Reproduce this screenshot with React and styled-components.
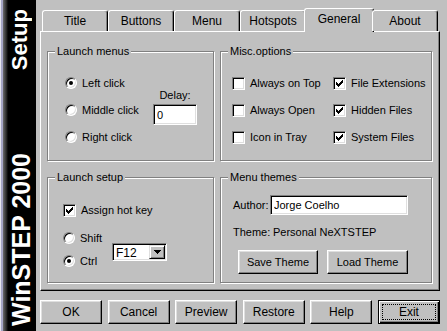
import React from "react";
import styled, { createGlobalStyle } from "styled-components";

const Global = createGlobalStyle`
  html, body {
    margin: 0;
    padding: 0;
    background: #c0c0c0;
  }
  body {
    font-family: "Liberation Sans", Arial, sans-serif;
    color: #000;
  }
`;

const Window = styled.div`
  display: flex;
  width: 447px;
  height: 331px;
  background: #c0c0c0;
  overflow: hidden;
`;

const Sidebar = styled.div`
  width: 36px;
  flex-shrink: 0;
  box-sizing: border-box;
  display: flex;
  flex-direction: column;
  justify-content: space-between;
  align-items: flex-start;
  padding: 9px 0 5px 9px;
  background: linear-gradient(
    to right,
    #e4e4ec 0 1px,
    #a4a4c4 1px 3px,
    #6a6a6a 3px,
    #1c1c1c 7px,
    #000 8px 100%
  );
`;

const SideText = styled.div`
  writing-mode: vertical-rl;
  transform: rotate(180deg);
  color: #fff;
  font-weight: bold;
  font-size: ${(p) => p.$size}px;
  line-height: 1;
  white-space: nowrap;
`;

const Main = styled.div`
  flex: 1;
  display: flex;
  flex-direction: column;
  padding: 8px 7px 0 4px;
`;

const TabRow = styled.div`
  display: flex;
  align-items: flex-end;
  height: 23px;
  padding: 0 2px;
  position: relative;
  z-index: 1;
`;

const Tab = styled.div`
  flex: 0 0 ${(p) => (p.$active ? 70 : 66)}px;
  height: ${(p) => (p.$active ? 24 : 21)}px;
  margin: ${(p) => (p.$active ? "0 -2px -1px" : "0")};
  box-sizing: border-box;
  background: #c0c0c0;
  border-top: 1px solid #fff;
  border-left: 1px solid #fff;
  border-right: 1px solid #000;
  border-radius: 3px 3px 0 0;
  box-shadow: inset -1px 0 #808080;
  display: flex;
  align-items: center;
  justify-content: center;
  padding-bottom: ${(p) => (p.$active ? 3 : 0)}px;
  font-size: 12px;
`;

const Panel = styled.div`
  height: 260px;
  box-sizing: border-box;
  border-top: 1px solid #fff;
  border-left: 1px solid #fff;
  border-right: 1px solid #000;
  border-bottom: 1px solid #000;
  box-shadow: inset -1px -1px #808080;
  display: grid;
  grid-template-columns: 167px 212px;
  grid-template-rows: 110px 106px;
  column-gap: 6px;
  row-gap: 16px;
  padding: 19px 6px 0 6px;
`;

const Group = styled.div`
  position: relative;
  border: 1px solid #808080;
  box-shadow: inset 1px 1px #fff, 1px 1px #fff;
  font-size: 11px;
`;

const Legend = styled.span`
  position: absolute;
  top: -7px;
  left: 7px;
  padding: 0 2px;
  background: #c0c0c0;
  line-height: 13px;
`;

const LaunchBody = styled.div`
  display: flex;
  align-items: flex-start;
  padding: 24px 0 0 17px;
`;

const OptionList = styled.div`
  display: flex;
  flex-direction: column;
  gap: ${(p) => p.$gap}px;
  width: ${(p) => (p.$width ? `${p.$width}px` : "auto")};
`;

const Option = styled.label`
  display: flex;
  align-items: center;
  gap: 5px;
  height: 14px;
  white-space: nowrap;
`;

const Radio = styled.span`
  width: 12px;
  height: 12px;
  flex-shrink: 0;
  box-sizing: border-box;
  border-radius: 50%;
  background: #fff;
  border: 1px solid;
  border-color: #808080 #fff #fff #808080;
  box-shadow: inset 1px 1px #000, inset -1px -1px #dfdfdf;
  display: flex;
  align-items: center;
  justify-content: center;

  &::after {
    content: "";
    display: ${(p) => (p.$on ? "block" : "none")};
    width: 4px;
    height: 4px;
    border-radius: 50%;
    background: #000;
  }
`;

const Box = styled.span`
  width: 13px;
  height: 13px;
  flex-shrink: 0;
  box-sizing: border-box;
  background: #fff;
  border: 1px solid;
  border-color: #808080 #fff #fff #808080;
  box-shadow: inset 1px 1px #000, inset -1px -1px #dfdfdf;
  display: flex;
  align-items: center;
  justify-content: center;
`;

const DelayCol = styled.div`
  display: flex;
  flex-direction: column;
  align-items: center;
  gap: 2px;
  margin-top: 13px;
  width: 44px;
`;

const Caption = styled.span`
  line-height: 13px;
  white-space: nowrap;
  width: ${(p) => (p.$width ? `${p.$width}px` : "auto")};
`;

const Field = styled.input`
  width: ${(p) => p.$w}px;
  height: ${(p) => p.$h}px;
  box-sizing: border-box;
  margin: 0;
  padding: 0 0 0 3px;
  background: #fff;
  border: 1px solid;
  border-color: #808080 #fff #fff #808080;
  box-shadow: inset 1px 1px #000, inset -1px -1px #dfdfdf;
  font: 11px "Liberation Sans", Arial, sans-serif;
  color: #000;
  outline: none;
`;

const MiscGrid = styled.div`
  display: grid;
  grid-template-columns: 101px auto;
  row-gap: 13px;
  padding: 24px 0 0 11px;
`;

const SetupBody = styled.div`
  display: flex;
  flex-direction: column;
  padding: 25px 0 0 15px;
`;

const KeyRow = styled.div`
  display: flex;
  align-items: flex-start;
  margin-top: 14px;
`;

const Select = styled.div`
  width: 55px;
  height: 18px;
  margin-top: 12px;
  box-sizing: border-box;
  background: #fff;
  border: 1px solid;
  border-color: #808080 #fff #fff #808080;
  box-shadow: inset 1px 1px #000, inset -1px -1px #dfdfdf;
  display: flex;
  align-items: stretch;
  padding: 1px 1px 1px 2px;
  font-size: 12px;
`;

const SelectValue = styled.span`
  flex: 1;
  display: flex;
  align-items: center;
  padding-left: 1px;
  padding-top: 1px;
`;

const DropButton = styled.span`
  width: 16px;
  box-sizing: border-box;
  background: #c0c0c0;
  border: 1px solid;
  border-color: #dfdfdf #000 #000 #dfdfdf;
  box-shadow: inset 1px 1px #fff, inset -1px -1px #808080;
  display: flex;
  align-items: center;
  justify-content: center;
`;

const ThemeBody = styled.div`
  display: flex;
  flex-direction: column;
  padding: 17px 0 0 12px;
`;

const Row = styled.div`
  display: flex;
  align-items: center;
  gap: ${(p) => p.$gap || 0}px;
  margin-top: ${(p) => p.$top || 0}px;
  padding-left: ${(p) => p.$left || 0}px;
`;

const Button = styled.button`
  width: ${(p) => p.$w || 62}px;
  height: 24px;
  box-sizing: border-box;
  margin: 0;
  padding: 0;
  background: #c0c0c0;
  border: 1px solid;
  border-color: ${(p) => (p.$default ? "#000" : "#fff #000 #000 #fff")};
  box-shadow: ${(p) =>
    p.$default
      ? "inset 1px 1px #fff, inset -1px -1px #000, inset -2px -2px #808080"
      : "inset -1px -1px #808080, inset 1px 1px #dfdfdf"};
  display: flex;
  align-items: stretch;
  justify-content: center;
  font: ${(p) => p.$size || 12}px "Liberation Sans", Arial, sans-serif;
  color: #000;
`;

const ButtonLabel = styled.span`
  flex: 1;
  display: flex;
  align-items: center;
  justify-content: center;
  margin: 3px;
  border: 1px dotted ${(p) => (p.$focus ? "#000" : "transparent")};
`;

const Footer = styled.div`
  display: flex;
  justify-content: space-between;
  margin-top: 9px;
`;

function CheckMark() {
  return (
    <svg width="7" height="7" viewBox="0 0 7 7" shapeRendering="crispEdges">
      <path
        fill="#000"
        d="M6 0h1v1h-1z M5 1h2v1h-2z M0 2h1v1h-1z M4 2h3v1h-3z M0 3h2v1h-2z M3 3h3v1h-3z M0 4h5v1h-5z M1 5h3v1h-3z M2 6h1v1h-1z"
      />
    </svg>
  );
}

function Check({ on, children }) {
  return (
    <Option>
      <Box>{on && <CheckMark />}</Box>
      {children}
    </Option>
  );
}

function RadioOption({ on, children }) {
  return (
    <Option>
      <Radio $on={on} />
      {children}
    </Option>
  );
}

const tabs = ["Title", "Buttons", "Menu", "Hotspots", "General", "About"];
const footerButtons = ["OK", "Cancel", "Preview", "Restore", "Help", "Exit"];

export default function App() {
  return (
    <Window>
      <Global />
      <Sidebar>
        <SideText $size={22}>Setup</SideText>
        <SideText $size={25}>WinSTEP 2000</SideText>
      </Sidebar>
      <Main>
        <TabRow>
          {tabs.map((t) => (
            <Tab key={t} $active={t === "General"}>
              {t}
            </Tab>
          ))}
        </TabRow>
        <Panel>
          <Group>
            <Legend>Launch menus</Legend>
            <LaunchBody>
              <OptionList $gap={13} $width={88}>
                <RadioOption on>Left click</RadioOption>
                <RadioOption>Middle click</RadioOption>
                <RadioOption>Right click</RadioOption>
              </OptionList>
              <DelayCol>
                <Caption>Delay:</Caption>
                <Field $w={44} $h={21} value="0" readOnly />
              </DelayCol>
            </LaunchBody>
          </Group>

          <Group>
            <Legend>Misc.options</Legend>
            <MiscGrid>
              <Check>Always on Top</Check>
              <Check on>File Extensions</Check>
              <Check>Always Open</Check>
              <Check on>Hidden Files</Check>
              <Check>Icon in Tray</Check>
              <Check on>System Files</Check>
            </MiscGrid>
          </Group>

          <Group>
            <Legend>Launch setup</Legend>
            <SetupBody>
              <Check on>Assign hot key</Check>
              <KeyRow>
                <OptionList $gap={9} $width={49}>
                  <RadioOption>Shift</RadioOption>
                  <RadioOption on>Ctrl</RadioOption>
                </OptionList>
                <Select>
                  <SelectValue>F12</SelectValue>
                  <DropButton>
                    <svg width="7" height="4" viewBox="0 0 7 4" shapeRendering="crispEdges">
                      <path fill="#000" d="M0 0h7v1h-7z M1 1h5v1h-5z M2 2h3v1h-3z M3 3h1v1h-1z" />
                    </svg>
                  </DropButton>
                </Select>
              </KeyRow>
            </SetupBody>
          </Group>

          <Group>
            <Legend>Menu themes</Legend>
            <ThemeBody>
              <Row>
                <Caption $width={37}>Author:</Caption>
                <Field $w={138} $h={20} value="Jorge Coelho" readOnly />
              </Row>
              <Row $top={11}>
                <Caption $width={40}>Theme:</Caption>
                <Caption>Personal NeXTSTEP</Caption>
              </Row>
              <Row $top={11} $left={5} $gap={9}>
                <Button $w={80} $size={11}>
                  <ButtonLabel>Save Theme</ButtonLabel>
                </Button>
                <Button $w={81} $size={11}>
                  <ButtonLabel>Load Theme</ButtonLabel>
                </Button>
              </Row>
            </ThemeBody>
          </Group>
        </Panel>
        <Footer>
          {footerButtons.map((b) => (
            <Button key={b} $default={b === "Exit"}>
              <ButtonLabel $focus={b === "Exit"}>{b}</ButtonLabel>
            </Button>
          ))}
        </Footer>
      </Main>
    </Window>
  );
}
